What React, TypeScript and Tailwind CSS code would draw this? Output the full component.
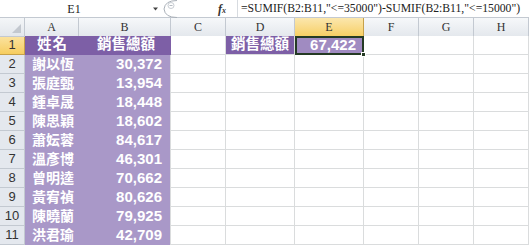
import React from 'react'

const rows: [string, string][] = [
  ['謝以恆', '30,372'],
  ['張庭甄', '13,954'],
  ['鍾卓晟', '18,448'],
  ['陳思穎', '18,602'],
  ['蕭妘蓉', '84,617'],
  ['溫彥博', '46,301'],
  ['曾明逵', '70,662'],
  ['黃宥禎', '80,626'],
  ['陳曉蘭', '79,925'],
  ['洪君瑜', '42,709'],
]

const cols = ['A', 'B', 'C', 'D', 'E', 'F', 'G', 'H']

const grid = 'grid grid-cols-[25px_54px_92px_55px_69px_69px_55px_55px_55px]'
const cjk = { fontFamily: '"Liberation Sans", "Noto Sans CJK TC", sans-serif' }
const serif = { fontFamily: '"Liberation Serif", "Noto Serif CJK TC", serif' }

function Blank() {
  return <div className="h-[19px] border-r border-b border-[#dadcdd] bg-white" />
}

function RowHead({ n, active }: { n: number; active?: boolean }) {
  return (
    <div
      className={`h-[19px] flex items-center justify-center border-r border-b text-[13px] text-[#333] ${
        active
          ? 'bg-gradient-to-b from-[#fbe3a0] to-[#f6cd5e] border-[#c6a14a]'
          : 'bg-[#e4e8ee] border-[#c3c9d1]'
      }`}
      style={cjk}
    >
      {n}
    </div>
  )
}

export default function App() {
  return (
    <div className="w-[529px] h-[247px] overflow-hidden bg-white select-none">
      {/* formula bar */}
      <div className="flex h-[18px] items-center border-b border-[#c3c9d1] bg-white text-[12px] text-[#222]" style={serif}>
        <div className="w-[148px] shrink-0 text-center">E1</div>
        <svg width="8" height="6" viewBox="0 0 8 6" className="ml-[4px] shrink-0">
          <path d="M1 1.5h5L3.5 4.5z" fill="#444" />
        </svg>
        <svg width="16" height="18" viewBox="0 0 16 18" className="ml-[2px] shrink-0">
          <path d="M15 0.5Q3 0.5 2 9Q3 17.5 15 17.5" fill="none" stroke="#a9b0b8" />
          <ellipse cx="9" cy="5.5" rx="3" ry="3" fill="none" stroke="#c8cdd3" />
          <path d="M7.5 5.5h3" stroke="#b5bbc2" />
        </svg>
        <div className="w-[48px] shrink-0 text-right italic font-bold text-[12px] text-[#333]">
          f<span className="text-[8px]">x</span>
        </div>
        <div className="ml-[11px] h-full shrink-0 border-l border-[#d7dbe0] pl-[3px] flex items-center whitespace-nowrap text-[11.7px]">
          =SUMIF(B2:B11,"&lt;=35000")-SUMIF(B2:B11,"&lt;=15000")
        </div>
      </div>

      {/* column headers */}
      <div className={`${grid} h-[18px]`}>
        <div className="relative border-r border-b border-[#c3c9d1] bg-gradient-to-b from-[#f4f6f8] to-[#e3e7ec]">
          <svg width="9" height="9" viewBox="0 0 9 9" className="absolute right-[3px] bottom-[3px]">
            <path d="M9 0V9H0z" fill="#c3c8cf" />
          </svg>
        </div>
        {cols.map((c) => (
          <div
            key={c}
            className={`flex items-center justify-center border-r border-b text-[12px] text-[#333] ${
              c === 'E'
                ? 'bg-gradient-to-b from-[#fbe7ad] to-[#f7cf63] border-[#c6a14a]'
                : 'bg-gradient-to-b from-[#f6f8fa] to-[#e4e8ed] border-[#c3c9d1]'
            }`}
            style={serif}
          >
            {c}
          </div>
        ))}
      </div>

      {/* row 1 */}
      <div className={grid}>
        <RowHead n={1} active />
        <div className="h-[19px] bg-[#7d5fa6] border-b border-[#7d5fa6] flex items-center pl-[12px] text-white font-bold text-[14.5px] tracking-[1px]" style={cjk}>
          姓名
        </div>
        <div className="h-[19px] bg-[#7d5fa6] border-r border-b border-[#7d5fa6] flex items-center justify-end pr-[15px] text-white font-bold text-[14.5px]" style={cjk}>
          銷售總額
        </div>
        <Blank />
        <div className="h-[19px] bg-[#7d5fa6] border-r border-b border-[#dadcdd] flex items-center justify-center text-white font-bold text-[14.5px]" style={cjk}>
          銷售總額
        </div>
        <div className="relative h-[19px] bg-[#a08bc1] border-2 border-[#243a24] flex items-center justify-end pr-[6px] text-white font-bold text-[15px]" style={cjk}>
          67,422
          <div className="absolute right-[-4px] bottom-[-4px] w-[5px] h-[5px] bg-[#243a24] border border-white" />
        </div>
        <Blank />
        <Blank />
        <Blank />
      </div>

      {rows.map(([name, amount], i) => (
        <div key={name} className={grid}>
          <RowHead n={i + 2} />
          <div className="h-[19px] bg-[#a998c8] flex items-center pl-[7px] text-white font-bold text-[14px]" style={cjk}>
            {name}
          </div>
          <div className="h-[19px] bg-[#a998c8] border-r border-[#dadcdd] flex items-center justify-end pr-[8px] text-white font-bold text-[15px]" style={cjk}>
            {amount}
          </div>
          <Blank />
          <Blank />
          <Blank />
          <Blank />
          <Blank />
          <Blank />
        </div>
      ))}
    </div>
  )
}
